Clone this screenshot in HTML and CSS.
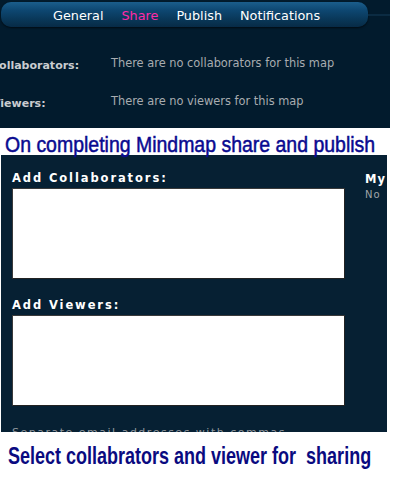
FILE: index.html
```html
<!DOCTYPE html>
<html>
<head>
<meta charset="utf-8">
<link rel="stylesheet" href="styles.css">
</head>
<body>
<section class="top">
  <div class="navrow">
    <nav class="navbar">
      <span class="tab">General</span>
      <span class="tab active">Share</span>
      <span class="tab">Publish</span>
      <span class="tab">Notifications</span>
    </nav>
    <div class="navline"></div>
  </div>
  <div class="rows">
    <div class="row">
      <span class="lbl">Collaborators:</span>
      <span class="val">There are no collaborators for this map</span>
    </div>
    <div class="row">
      <span class="lbl">Viewers:</span>
      <span class="val">There are no viewers for this map</span>
    </div>
  </div>
</section>
<h2 class="cap cap1"><span class="squeeze">On completing Mindmap share and publish</span></h2>
<section class="share">
  <div class="left">
    <div class="flabel">Add Collaborators:</div>
    <div class="box"></div>
    <div class="flabel second">Add Viewers:</div>
    <div class="box"></div>
    <div class="hint">Separate email addresses with commas</div>
  </div>
  <div class="right">
    <div class="mytitle">My</div>
    <div class="mysub">No</div>
  </div>
</section>
<h2 class="cap cap2"><span class="squeeze">Select collabrators and viewer for&nbsp; sharing</span></h2>
</body>
</html>
```
FILE: styles.css
```css
html, body {
  margin: 0;
  padding: 0;
  background: #ffffff;
}
body {
  width: 395px;
  height: 478px;
  overflow: hidden;
  font-family: "DejaVu Sans", Verdana, sans-serif;
}
.top {
  width: 390px;
  height: 128px;
  background: #021b2d;
  overflow: hidden;
  box-sizing: border-box;
  padding-top: 2px;
}
.navrow {
  display: flex;
  align-items: center;
}
.navbar {
  margin-left: 1px;
  width: 367px;
  height: 25px;
  box-sizing: border-box;
  border-radius: 10px;
  background: linear-gradient(#1b5e8c 0%, #0d4670 35%, #093758 70%, #072b46 100%);
  box-shadow: 0 1px 2px rgba(0, 0, 0, 0.6);
  display: flex;
  align-items: center;
  padding-left: 52px;
  padding-top: 3px;
}
.tab {
  color: #ffffff;
  font-size: 12.8px;
  line-height: 22px;
  margin-right: 18px;
}
.tab.active {
  color: #ff2aa8;
}
.navline {
  flex: 1;
  height: 2px;
  background: #0b2b42;
}
.rows {
  padding-top: 29px;
  display: flex;
  flex-direction: column;
  gap: 24px;
}
.row {
  display: grid;
  grid-template-columns: 111px 1fr;
  align-items: start;
  height: 14px;
}
.lbl {
  margin-left: -9px;
  padding-top: 3px;
  color: #c9ccd0;
  font-weight: bold;
  font-size: 11px;
  white-space: nowrap;
}
.row:nth-child(2) .lbl {
  margin-left: -8px;
}
.val {
  color: #a8acb0;
  font-size: 11.4px;
  white-space: nowrap;
}
.cap {
  margin: 0;
  width: 390px;
  overflow-x: clip;
  overflow-y: visible;
  font-family: "Liberation Sans", Arial, sans-serif;
  white-space: nowrap;
}
.squeeze {
  display: inline-block;
  transform-origin: 0 0;
}
.cap1 {
  height: 27px;
  padding-left: 5px;
  box-sizing: border-box;
  font-weight: normal;
  font-size: 22px;
  line-height: 33px;
  color: #0a0a90;
  -webkit-text-stroke: 0.5px #0a0a90;
}
.cap1 .squeeze {
  transform: scaleX(0.885);
}
.share {
  width: 386px;
  margin-left: 1px;
  height: 277px;
  background: #062033;
  overflow: hidden;
  display: flex;
  box-sizing: border-box;
  padding-top: 16px;
}
.left {
  margin-left: 11px;
  width: 333px;
}
.flabel {
  color: #ffffff;
  font-size: 11.5px;
  letter-spacing: 1.9px;
  height: 17px;
  font-weight: bold;
}
.flabel.second {
  margin-top: 19px;
}
.box {
  height: 91px;
  background: #ffffff;
  border-top: 1px solid #3a3a3a;
  border-left: 1px solid #3a3a3a;
  border-right: 1px solid #222;
  border-bottom: 1px solid #222;
  box-sizing: border-box;
}
.hint {
  margin-top: 20px;
  color: #8f969c;
  font-size: 11px;
  letter-spacing: 1.5px;
  white-space: nowrap;
}
.right {
  margin-left: 20px;
  padding-top: 1px;
}
.mytitle {
  color: #ffffff;
  font-size: 11.5px;
  font-weight: bold;
  letter-spacing: 1px;
  height: 17px;
}
.mysub {
  color: #a0a4a8;
  font-size: 10px;
  letter-spacing: 1px;
}
.cap2 {
  padding-left: 8px;
  padding-top: 10px;
  box-sizing: border-box;
  font-weight: bold;
  font-size: 24px;
  line-height: 28px;
  color: #0a0a80;
}
.cap2 .squeeze {
  transform: scaleX(0.75);
}
```
